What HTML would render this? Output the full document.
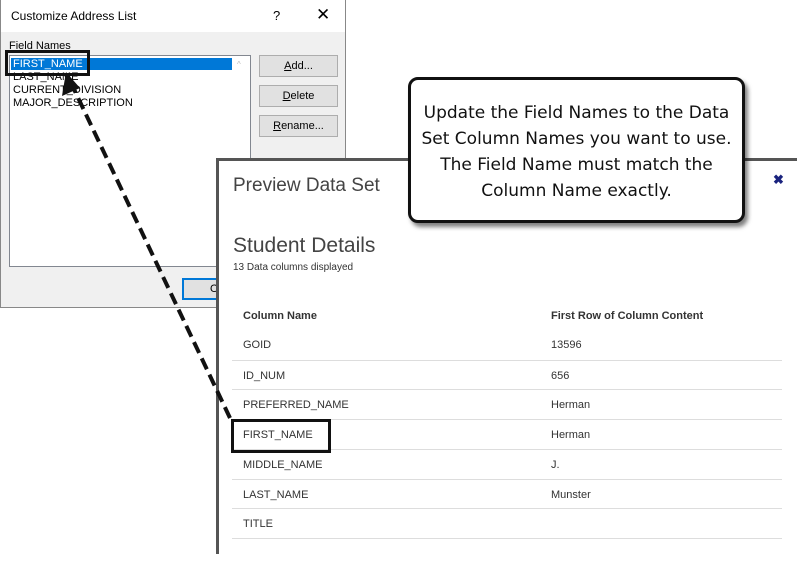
<!DOCTYPE html>
<html><head><style>
body{margin:0;width:797px;height:554px;position:relative;overflow:hidden;background:#fff;font-family:"Liberation Sans",sans-serif}
.abs{position:absolute}
.btn{position:absolute;left:259px;width:77px;height:20px;background:#e1e1e1;border:1px solid #adadad;font-size:11px;text-align:center;line-height:20px;color:#000}
.row{position:absolute;left:232px;width:550px;height:30px;border-top:1px solid #ddd;font-size:11px;color:#333}
.row span{position:absolute;top:9px}
</style></head><body>
<div class="abs" style="left:0;top:0;width:344px;height:307px;background:#f0f0f0;border:1px solid #888;border-top:none">
 <div class="abs" style="left:0;top:0;width:344px;height:32px;background:#fff"></div>
 <div class="abs" style="left:10px;top:9px;font-size:12px;color:#000">Customize Address List</div>
 <div class="abs" style="left:272px;top:8px;font-size:13px">?</div>
 <div class="abs" style="left:315px;top:5px;font-size:17px">✕</div>
 <div class="abs" style="left:8px;top:40px;font-size:11px">Field Names</div>
 <div class="abs" style="left:8px;top:55px;width:240px;height:210px;background:#fff;border:1px solid #828790"></div>
 <div class="abs" style="left:10px;top:58px;width:221px;height:12px;background:#0078d7"></div>
 <div class="abs" style="left:12px;top:58px;font-size:11px;line-height:13px;color:#000"><span style="color:#fff">FIRST_NAME</span><br>LAST_NAME<br>CURRENT_DIVISION<br>MAJOR_DESCRIPTION</div>
 <div class="abs" style="left:236px;top:60px;font-size:8px;color:#bbb">^</div>
 <div class="abs" style="left:181px;top:278px;width:40px;height:18px;border:2px solid #0078d7;background:#e1e1e1;font-size:11px;line-height:18px;padding-left:26px">O</div>
</div>
<div class="btn" style="top:55px"><u>A</u>dd...</div>
<div class="btn" style="top:85px"><u>D</u>elete</div>
<div class="btn" style="top:115px"><u>R</u>ename...</div>
<div class="abs" style="left:5px;top:50px;width:79px;height:20px;border:3px solid #111"></div>
<div class="abs" style="left:216px;top:158px;width:581px;height:396px;background:#fff;border-left:3px solid #555;border-top:3px solid #555;box-sizing:border-box"></div>
<div class="abs" style="left:233px;top:175px;font-size:19px;color:#444">Preview Data Set</div>
<div class="abs" style="left:773px;top:172px;font-size:13px;color:#1a237e;font-weight:bold">✖</div>
<div class="abs" style="left:233px;top:234px;font-size:21px;color:#444">Student Details</div>
<div class="abs" style="left:233px;top:262px;font-size:10px;color:#333">13 Data columns displayed</div>
<div class="abs" style="left:243px;top:310px;font-size:11px;font-weight:bold;color:#333">Column Name</div>
<div class="abs" style="left:551px;top:310px;font-size:11px;font-weight:bold;color:#333">First Row of Column Content</div>
<div class="row" style="top:330px;border-top:none"><span style="left:11px">GOID</span><span style="left:319px">13596</span></div>
<div class="row" style="top:360px"><span style="left:11px">ID_NUM</span><span style="left:319px">656</span></div>
<div class="row" style="top:389px"><span style="left:11px">PREFERRED_NAME</span><span style="left:319px">Herman</span></div>
<div class="row" style="top:419px"><span style="left:11px">FIRST_NAME</span><span style="left:319px">Herman</span></div>
<div class="row" style="top:449px"><span style="left:11px">MIDDLE_NAME</span><span style="left:319px">J.</span></div>
<div class="row" style="top:479px"><span style="left:11px">LAST_NAME</span><span style="left:319px">Munster</span></div>
<div class="row" style="top:508px"><span style="left:11px">TITLE</span></div>
<div class="row" style="top:538px"></div>
<div class="abs" style="left:231px;top:419px;width:94px;height:28px;border:3px solid #111"></div>
<svg class="abs" style="left:0;top:0" width="797" height="554"><line x1="230" y1="418" x2="72" y2="85" stroke="#111" stroke-width="4" stroke-dasharray="12,6"/><polygon points="66,72 62,96 80,88" fill="#111"/></svg>
<div class="abs" style="left:408px;top:77px;width:337px;height:146px;background:#fff;border:3px solid #111;border-radius:10px;box-shadow:3px 4px 4px rgba(0,0,0,.5);font-size:17px;color:#111;text-align:center;line-height:26px;padding-top:20px;box-sizing:border-box;font-family:'DejaVu Sans','Liberation Sans',sans-serif;white-space:nowrap">Update the Field Names to the Data<br>Set Column Names you want to use.<br>The Field Name must match the<br>Column Name exactly.</div>
</body></html>
